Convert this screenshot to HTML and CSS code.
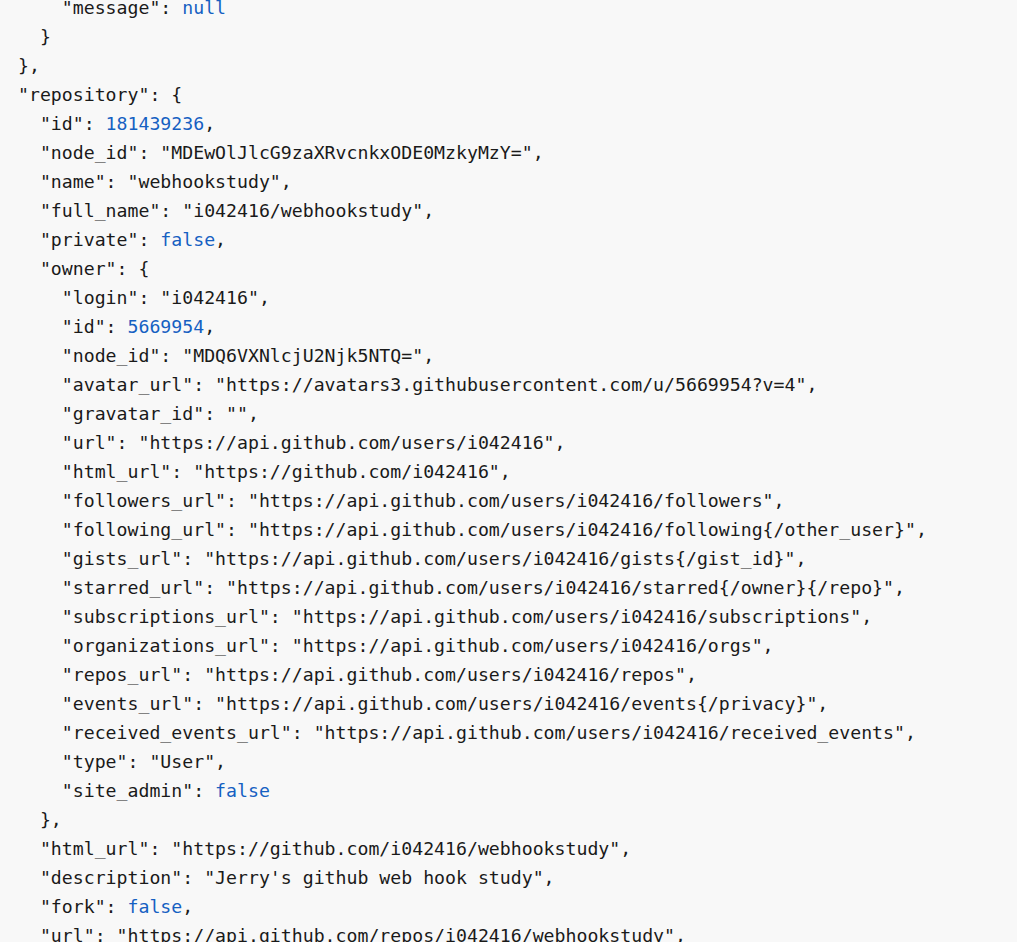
FILE: index.html
```html
<!DOCTYPE html>
<html>
<head>
<meta charset="utf-8">
<link rel="stylesheet" href="styles.css">
</head>
<body>
<pre class="code">    "message": <span class="lit">null</span>
  }
},
"repository": {
  "id": <span class="lit">181439236</span>,
  "node_id": "MDEwOlJlcG9zaXRvcnkxODE0MzkyMzY=",
  "name": "webhookstudy",
  "full_name": "i042416/webhookstudy",
  "private": <span class="lit">false</span>,
  "owner": {
    "login": "i042416",
    "id": <span class="lit">5669954</span>,
    "node_id": "MDQ6VXNlcjU2Njk5NTQ=",
    "avatar_url": "https://avatars3.githubusercontent.com/u/5669954?v=4",
    "gravatar_id": "",
    "url": "https://api.github.com/users/i042416",
    "html_url": "https://github.com/i042416",
    "followers_url": "https://api.github.com/users/i042416/followers",
    "following_url": "https://api.github.com/users/i042416/following{/other_user}",
    "gists_url": "https://api.github.com/users/i042416/gists{/gist_id}",
    "starred_url": "https://api.github.com/users/i042416/starred{/owner}{/repo}",
    "subscriptions_url": "https://api.github.com/users/i042416/subscriptions",
    "organizations_url": "https://api.github.com/users/i042416/orgs",
    "repos_url": "https://api.github.com/users/i042416/repos",
    "events_url": "https://api.github.com/users/i042416/events{/privacy}",
    "received_events_url": "https://api.github.com/users/i042416/received_events",
    "type": "User",
    "site_admin": <span class="lit">false</span>
  },
  "html_url": "https://github.com/i042416/webhookstudy",
  "description": "Jerry's github web hook study",
  "fork": <span class="lit">false</span>,
  "url": "https://api.github.com/repos/i042416/webhookstudy",
</pre>
</body>
</html>
```
FILE: styles.css
```css
html, body {
  margin: 0;
  padding: 0;
  background: #f8f8f8;
  overflow: hidden;
}
.code {
  margin: -7px 0 0 0;
  padding: 0 0 0 18px;
  font-family: "DejaVu Sans Mono", "Liberation Mono", monospace;
  font-size: 18.2px;
  line-height: 29px;
  color: #1a1a1a;
  white-space: pre;
}
.lit {
  color: #1560c2;
}
```
